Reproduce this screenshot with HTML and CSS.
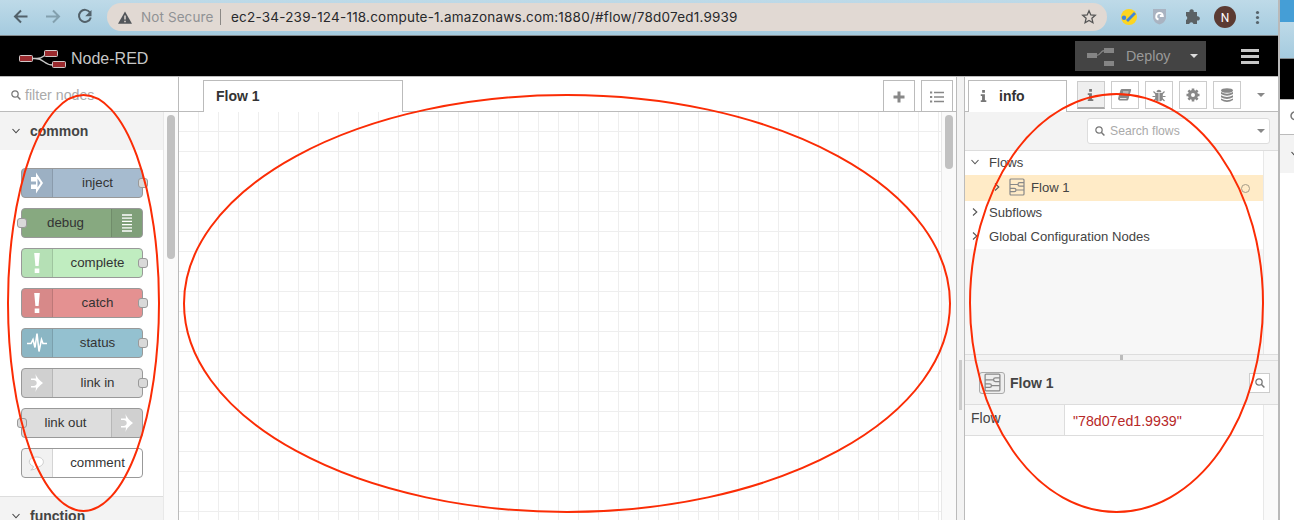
FILE: index.html
```html
<!DOCTYPE html>
<html lang="en">
<head>
<meta charset="utf-8">
<title>Node-RED</title>
<link rel="stylesheet" href="styles.css">
</head>
<body>
<svg width="0" height="0" class="defs">
  <defs>
    <symbol id="search" viewBox="0 0 12 12"><circle cx="4.8" cy="4.8" r="3.800" fill="none" stroke="currentColor" stroke-width="1.500"/><path d="M7.5 7.5L11.300 11.300" stroke="currentColor" stroke-width="1.8"/></symbol>
    <symbol id="down" viewBox="0 0 10 10"><path d="M1.500 3L5 6.800L8.500 3" fill="none" stroke="currentColor" stroke-width="1.100"/></symbol>
    <symbol id="right" viewBox="0 0 10 10"><path d="M3 1.500L6.800 5L3 8.500" fill="none" stroke="currentColor" stroke-width="1.100"/></symbol>
    <symbol id="info" viewBox="0 0 8 13"><path d="M2 0h3v3H2zM0.5 4.500h4.500v6.500h1.500v2H.5v-2h1.400V6.500H.5z" fill="currentColor"/></symbol>
    <symbol id="flow" viewBox="0 0 16 18"><g fill="none" stroke="currentColor" stroke-width="1.200"><rect x="1" y="1" width="14" height="16" rx="1"/><path d="M1 6.500h8M15 4.700H10.700q-1.700 0-1.700 1.700t1.700 1.700H15M1 10.300h4.300q1.700 0 1.700 1.700t-1.700 1.700H1M7 12h8"/></g></symbol>
    <symbol id="link" viewBox="0 0 14 20"><path d="M5.500 1Q7 5.500 13 10Q7 14.500 5.500 19L6 14.500H1V5.500H6z" fill="currentColor"/><path d="M0 7h3.500q3.200.3 3.200 3t-3.200 3H0z" fill="#d1d1d1"/></symbol>
    <symbol id="bang" viewBox="0 0 8 20"><path d="M1.200 0h5.600L5.600 13H2.400zM1.700 15.500h4.600V20H1.700z" fill="currentColor"/></symbol>
  </defs>
</svg>
<div class="screen">
  <div class="window">
    <div class="chrome">
      <svg class="nav" width="100" height="35" fill="none" stroke-width="2">
        <path d="M27.500 16.500H15M21 10.500l-6 6l6 6" stroke="#52616a"/>
        <path d="M46 16.500h12.500M53 10.500l6 6l-6 6" stroke="#83a0ae"/>
        <path d="M90 12.500a6 6 0 1 0 .8 5" stroke="#52616a"/><path d="M91.500 10v6.300h-6.300z" fill="#52616a"/>
      </svg>
      <div class="address">
        <svg class="warn" width="14" height="13"><path d="M7 .5L14 12.700H0z" fill="#52565a"/><path d="M7 4.500v4M7 9.800v1.500" stroke="#e1d9d3" stroke-width="1.500"/></svg>
        <span class="insecure">Not Secure</span><i class="bar"></i><span class="url">ec2-34-239-124-118.compute-1.amazonaws.com:1880/#flow/78d07ed1.9939</span>
        <svg class="star" width="16" height="16" viewBox="0 0 16 16"><path d="M8 1.800l1.800 4.100 4.500.4-3.400 3 1 4.400L8 11.400l-3.900 2.300 1-4.400-3.400-3 4.500-.4z" fill="none" stroke="#555" stroke-width="1.300"/></svg>
      </div>
      <svg class="ext" width="171" height="35">
        <circle cx="22" cy="17" r="8" fill="#fdd520"/><circle cx="17" cy="17.800" r="2.200" fill="#4285d8"/><path d="M20 21L28 13" stroke="#4285d8" stroke-width="2.800"/>
        <path d="M46 9h13v9q-1 5-6.500 6.500Q47 23 46 18z" fill="#a9b3c1"/><path d="M51.500 19.500a3.300 3.300 0 1 1 4.300-3.500h-3" fill="none" stroke="#fff" stroke-width="1.900"/>
        <path d="M79 12h3.500a2.200 2.200 0 1 1 4.200 0H90v4.300a2.200 2.200 0 1 1 0 4.200V24h-3.500a2.200 2.200 0 0 0-4.300 0H79v-4a2.200 2.200 0 0 0 0-4z" fill="#5b6164"/>
        <circle cx="118" cy="17" r="11" fill="#5b3a32"/><text x="118" y="21.500" text-anchor="middle" font-family="Roboto,sans-serif" font-size="12" fill="#fff">N</text>
        <g fill="#56636b"><circle cx="150.500" cy="12.500" r="1.600"/><circle cx="150.500" cy="17.500" r="1.600"/><circle cx="150.500" cy="22.500" r="1.600"/></g>
      </svg>
    </div>
    <header class="header">
      <svg class="logo" width="48" height="20"><path d="M14 8.500H18C26 8.500 23 4 31 4M16 8.500C26 8.500 24 15 34 15" fill="none" stroke="#c8c8c8" stroke-width="1.300"/><g fill="#9b2b2f" stroke="#d0c8c8"><rect x=".5" y="5.500" width="13" height="6" rx="1"/><rect x="25.500" y=".5" width="13" height="6" rx="1"/><rect x="33.500" y="11.500" width="13" height="6" rx="1"/></g></svg>
      <span class="brand">Node-RED</span>
      <div class="deploy"><svg width="28" height="20"><path d="M0 7h10v5H0zM17 2h10v5H17zM17 15h10v5H17z" fill="#858585"/><path d="M9 9.500C15 9.500 12 4.500 18 4.500" fill="none" stroke="#858585" stroke-width="1.300"/></svg><span>Deploy</span><i class="caret light"></i></div>
      <div class="burger"><i></i><i></i><i></i></div>
    </header>
    <div class="main">
      <aside class="palette">
        <div class="filter"><svg width="10" height="10"><use href="#search"/></svg><span>filter nodes</span></div>
        <div class="pbody">
          <div class="plist">
            <div class="cat"><svg width="10" height="10"><use href="#down"/></svg>common</div>
            <div class="nodes">
              <div class="node inject"><b><svg width="14" height="22"><path d="M1 5h5V0.500L13 11L6 21.500V17H1V12.500H6V9.500H1z" fill="#fff"/><path d="M7.500 6.500L10.500 11L7.500 15.500z" fill="#98abc0"/></svg></b><span>inject</span><i class="port"></i></div>
              <div class="node debug rev"><b><svg width="10" height="18"><path d="M0 1h10M0 4.200h10M0 7.400h10M0 10.600h10M0 13.800h10M0 17h10" stroke="#fff" stroke-width="1.300"/></svg></b><span>debug</span><i class="port"></i></div>
              <div class="node complete"><b><svg width="8" height="20"><use href="#bang"/></svg></b><span>complete</span><i class="port"></i></div>
              <div class="node catch"><b><svg width="8" height="20"><use href="#bang"/></svg></b><span>catch</span><i class="port"></i></div>
              <div class="node status"><b><svg width="20" height="22"><path d="M0 11.500h4l2-4 2 8 2-14 2 18 2.500-12 1.500 4h4" fill="none" stroke="#fff" stroke-width="1.600"/></svg></b><span>status</span><i class="port"></i></div>
              <div class="node grey"><b><svg width="14" height="20"><use href="#link"/></svg></b><span>link in</span><i class="port"></i></div>
              <div class="node grey rev"><b><svg width="14" height="20"><use href="#link"/></svg></b><span>link out</span><i class="port"></i></div>
              <div class="node comment"><b><svg width="18" height="15"><path d="M5.500 10.500C-1 8 0 1 8.500 1S18 9.500 9.500 11.200Q7 14 2.800 14Q5.300 12.500 5.500 10.500z" fill="#fff" stroke="#ccc"/></svg></b><span>comment</span></div>
            </div>
            <div class="cat fn"><svg width="10" height="10"><use href="#down"/></svg>function</div>
          </div>
          <div class="track"><i class="t1"></i></div>
        </div>
      </aside>
      <section class="workspace">
        <div class="tabs"><div class="tab">Flow 1</div><div class="tbtn"><svg width="12" height="12"><path d="M6 .5v11M.5 6h11" stroke="#888" stroke-width="3"/></svg></div><div class="tbtn last"><svg width="14" height="12"><path d="M4 1.500h10M4 6h10M4 10.500h10" stroke="#888" stroke-width="1.400"/><path d="M0 1.500h2.200M0 6h2.200M0 10.500h2.200" stroke="#888" stroke-width="2"/></svg></div></div>
        <div class="wbody"><div class="grid"></div><div class="track wtrack"><i class="t2"></i></div></div>
      </section>
      <div class="splitter"><i></i></div>
      <aside class="sidebar">
        <div class="stabs">
          <div class="stab"><svg width="8" height="12"><use href="#info"/></svg>info</div>
          <div class="sbtns">
            <div class="sbtn on"><svg width="8" height="12"><use href="#info"/></svg></div>
            <div class="sbtn"><svg width="14" height="12"><path d="M3.500 0H12.500q1 .3.500 1.500L10.500 10q-.5 1.500-1.500 1.500H1.500Q-.5 11 .3 8.500L2.500 1z" fill="#888"/><path d="M5 3h5.500M4.500 5h5.500M2 9.500h6.500" stroke="#fff" stroke-width=".8"/></svg></div>
            <div class="sbtn"><svg width="14" height="13"><path d="M4.500 3.200a2.500 2.500 0 0 1 5 0zM3.200 4h3.400v8.500Q3.200 12 3.200 9zM7.400 4h3.400v5q0 3-3.400 3.500z" fill="#888"/><path d="M1.500 2.500L4 5M12.500 2.500L10 5M.5 7.500h3M10.500 7.500h3M1.500 12L4 9.500M12.500 12L10 9.500" stroke="#888" stroke-width="1.200"/></svg></div>
            <div class="sbtn"><svg width="14" height="14"><circle cx="7" cy="7" r="3.500" fill="none" stroke="#888" stroke-width="3"/><path d="M7 .5v2.500M7 11V13.500M.5 7h2.500M11 7h2.500M2.400 2.400l1.500 1.500M10.100 10.100l1.500 1.500M11.600 2.400L10.100 3.900M3.900 10.100l-1.500 1.500" stroke="#888" stroke-width="2.600"/></svg></div>
            <div class="sbtn"><svg width="12" height="14" fill="#888"><ellipse cx="6" cy="2.500" rx="6" ry="2.300"/><path d="M0 4q6 3.500 12 0v2q-6 3.500-12 0zM0 7.200q6 3.500 12 0v2q-6 3.500-12 0zM0 10.400q6 3.500 12 0v1.500q-6 4-12 0z"/></svg></div>
          </div>
          <i class="caret"></i>
        </div>
        <div class="stool"><div class="search"><svg width="10" height="10"><use href="#search"/></svg><span>Search flows</span><i class="caret"></i></div></div>
        <div class="outline">
          <div class="tree">
            <div class="row"><svg width="10" height="10"><use href="#down"/></svg>Flows</div>
            <div class="row sel"><svg width="10" height="10"><use href="#right"/></svg><svg class="ficon" width="16" height="18"><use href="#flow"/></svg>Flow 1<i class="ring"></i></div>
            <div class="row"><svg width="10" height="10"><use href="#right"/></svg>Subflows</div>
            <div class="row"><svg width="10" height="10"><use href="#right"/></svg>Global Configuration Nodes</div>
          </div>
          <div class="track strack"></div>
        </div>
        <div class="hsplit"><i></i></div>
        <div class="ihead"><div class="ibox"><svg width="17" height="19"><use href="#flow"/></svg></div><span>Flow 1</span><div class="find"><svg width="10" height="10"><use href="#search"/></svg></div></div>
        <div class="ibody"><div class="props"><div class="prop"><div class="key">Flow</div><div class="val">"78d07ed1.9939"</div></div></div><div class="track strack"></div></div>
      </aside>
    </div>
  </div>
  <div class="behind">
    <div class="b1"></div><div class="b2"></div><div class="b3"></div>
    <div class="b4"><svg width="12" height="12"><use href="#search"/></svg></div>
    <div class="b5"><svg width="10" height="10"><use href="#down"/></svg></div>
  </div>
  <svg class="marks" width="1294" height="520" fill="none" stroke="#fb2c05" stroke-width="2"><ellipse cx="83.500" cy="303" rx="75.500" ry="208"/><ellipse cx="567" cy="303.500" rx="383" ry="208.500"/><ellipse cx="1116.500" cy="303" rx="146.500" ry="209"/></svg>
</div>
</body>
</html>
```
FILE: styles.css
```css
* { box-sizing: border-box; }
body { margin: 0; font-family: "Liberation Sans", Arial, sans-serif; font-size: 13px; color: #444; overflow: hidden; }
svg { flex: none; display: block; }
.defs { position: absolute; }
.screen { position: relative; display: flex; width: 1294px; height: 520px; overflow: hidden; background: #fff; }
.window { width: 1280px; border-right: 2px solid #b9b9b9; display: flex; flex-direction: column; }
.chrome { height: 36px; display: flex; background: linear-gradient(#bedae8, #a5cbdf); border-bottom: 1px solid #83898c; }
.nav { margin-right: 7px; }
.address { width: 1000px; height: 28px; margin-top: 3px; border-radius: 14px; background: #e1d9d3; display: flex; align-items: center; padding: 0 10px 0 11px; font-family: Inter, sans-serif; font-size: 13.5px; white-space: nowrap; }
.insecure { color: #909295; margin-left: 9px; width: 72px; letter-spacing: 0.1px; }
.bar { width: 1px; height: 16px; background: #8c8986; margin: 0 10px 0 7px; }
.url { color: #28292c; letter-spacing: 0.21px; }
.star { margin-left: auto; }
.header { height: 40px; background: #000; display: flex; align-items: center; padding-left: 19px; flex: none; }
.logo { margin-top: 7px; }
.brand { color: #c7c7c7; font-size: 16px; margin: 6px 0 0 4px; }
.deploy { margin-left: auto; width: 131px; height: 30px; background: #444; display: flex; align-items: center; padding-left: 12px; color: #999; font-size: 14.3px; }
.deploy span { margin: 0 19px 0 11px; width: 45px; }
.deploy svg { margin-top: -1px; }
.caret { border: 4px solid transparent; border-top-color: #888; border-bottom: 0; width: 8px; height: 4px; flex: none; }
.caret.light { border-top-color: #ddd; }
.burger { width: 18px; margin: 0 19px 0 35px; display: grid; gap: 3px; }
.burger i { height: 3px; background: #c7c7c7; }
.main { flex: 1; display: flex; border-top: 1px solid #bbb; min-height: 0; }
.palette { width: 179px; border-right: 1px solid #bbb; display: flex; flex-direction: column; }
.filter { height: 35px; border-bottom: 1px solid #bbb; display: flex; align-items: center; gap: 4px; padding: 2px 0 0 11px; font-size: 14.2px; color: #aaa; }
.filter svg { color: #777; }
.pbody { flex: 1; display: flex; overflow: hidden; }
.plist { width: 163px; }
.track { width: 15px; border-left: 1px solid #e8e8e8; background: #fafafa; padding: 3px 0 0 3px; }
.track i { display: block; width: 8px; border-radius: 4px; background: #c1c1c1; }
.t1 { height: 144px; }
.t2 { height: 54px; }
.cat { height: 38px; background: #f3f3f3; display: flex; align-items: center; gap: 9px; padding-left: 11px; font-weight: bold; font-size: 14px; color: #444; }
.fn { border-top: 1px solid #ddd; height: 39px; }
.nodes { padding: 18px 20px 18px 21px; display: grid; gap: 10px; height: 346px; align-content: start; }
.node { position: relative; height: 30px; width: 122px; border: 1px solid #999; border-radius: 4px; display: flex; align-items: center; color: #333; font-size: 13.3px; }
.node b { width: 31px; height: 28px; background: rgba(0,0,0,.055); border-right: 1px solid rgba(0,0,0,.12); display: flex; align-items: center; justify-content: center; color: #fff; border-radius: 3px 0 0 3px; }
.node span { flex: 1; text-align: center; padding-bottom: 2px; }
.rev { flex-direction: row-reverse; }
.rev b { border-right: 0; border-left: 1px solid rgba(0,0,0,.12); border-radius: 0 3px 3px 0; }
.rev span { padding-right: 2px; }
.port { position: absolute; right: -6px; top: 9px; width: 10px; height: 10px; background: #d9d9d9; border: 1px solid #999; border-radius: 3px; }
.rev .port { right: auto; left: -5px; }
.inject { background: #a6bbcf; }
.debug { background: #87a980; }
.complete { background: #c0edc0; }
.catch { background: #e49191; }
.status { background: #94c1d0; }
.grey { background: #ddd; }
.comment { background: #fff; }
.workspace { width: 778px; border-right: 1px solid #bbb; display: flex; flex-direction: column; }
.tabs { height: 35px; border-bottom: 1px solid #bbb; display: flex; padding: 3px 3px 0 24px; flex: none; }
.tab { width: 200px; height: 32px; border: 1px solid #bbb; border-bottom: 0; background: #fff; font-weight: bold; font-size: 14px; padding: 7px 12px; color: #333; }
.tbtn { width: 32px; height: 32px; border: 1px solid #bbb; border-bottom: 0; margin-left: auto; display: flex; justify-content: center; align-items: center; padding-top: 1px; }
.last { margin-left: 6px; }
.wbody { flex: 1; display: flex; }
.grid { width: 762px; background-image: linear-gradient(90deg, #eee 1px, transparent 1px), linear-gradient(#eee 1px, transparent 1px); background-size: 20px 20px; background-position: 19px 19px; }
.splitter { width: 7px; background: #f3f3f3; display: flex; align-items: flex-start; padding: 283px 0 0 2px; }
.splitter i { width: 3px; height: 50px; background: #ccc; }
.sidebar { flex: 1; border-left: 1px solid #bbb; display: flex; flex-direction: column; min-width: 0; }
.stabs { height: 35px; border-bottom: 1px solid #bbb; display: flex; padding: 3px 0 0 3px; flex: none; }
.stab { width: 99px; height: 32px; border: 1px solid #bbb; border-bottom: 0; background: #fff; display: flex; align-items: center; gap: 11px; padding: 0 0 2px 11px; font-weight: bold; font-size: 14px; color: #333; }
.stab svg, .sbtn.on svg { color: #777; }
.sbtns { display: flex; gap: 6px; margin: 1px 16px 0 10px; }
.sbtn { width: 28px; height: 28px; border: 1px solid #ccc; display: flex; align-items: center; justify-content: center; }
.sbtn.on { background: #efefef; border-bottom: 2px solid #aaa; }
.stabs > .caret { margin-top: 13px; }
.stool { height: 39px; background: #f3f3f3; border-bottom: 1px solid #ddd; padding: 6px 8px 0 0; display: flex; justify-content: flex-end; flex: none; }
.search { width: 183px; height: 26px; background: #fff; border: 1px solid #ddd; border-radius: 3px; display: flex; align-items: center; padding: 0 4px 0 7px; color: #777; }
.search span { margin: 0 auto 1px 5px; color: #aaa; font-size: 12.2px; }
.outline { height: 203px; display: flex; background: #f7f7f7; }
.tree { width: 298px; }
.row { height: 24px; background: #fff; display: flex; align-items: center; gap: 9px; padding: 0 0 2px 5px; color: #444; font-size: 13.1px; }
.row.sel { height: 26px; background: #ffebc7; padding-left: 27px; gap: 6px; }
.ficon { color: #888; margin-left: 1px; }
.row svg:first-child { color: #555; }
.ring { width: 9px; height: 9px; border: 1px solid #a59b88; border-radius: 50%; margin: 2px 13px 0 auto; }
.strack { flex: 1; }
.hsplit { height: 7px; border: 1px solid #ddd; border-left: 0; border-right: 0; background: #f3f3f3; display: flex; justify-content: center; }
.hsplit i { width: 3px; height: 5px; background: #bbb; }
.ihead { height: 44px; background: #f3f3f3; border-bottom: 1px solid #ddd; display: flex; align-items: center; padding: 0 8px 0 14px; font-weight: bold; font-size: 14px; color: #444; }
.ibox { width: 26px; height: 22px; border: 1px solid #aaa; border-radius: 3px; background: #eee; display: flex; align-items: center; justify-content: center; color: #888; margin-right: 5px; }
.find { width: 21px; height: 20px; border: 1px solid #ccc; background: #fff; margin-left: auto; display: flex; align-items: center; justify-content: center; color: #777; }
.ibody { flex: 1; display: flex; }
.props { width: 298px; }
.prop { height: 31px; display: flex; border-bottom: 1px solid #ddd; }
.key { width: 100px; background: #f7f7f7; border-right: 1px solid #ddd; padding: 5px 0 0 6px; font-size: 14px; }
.val { padding: 8px 0 0 8px; color: #b72828; font-size: 14.2px; }
.behind { width: 14px; overflow: hidden; }
.b1 { height: 22px; background: #459ed6; }
.b2 { height: 37px; background: linear-gradient(#bedae8, #a5cbdf); border-bottom: 1px solid #83898c; }
.b3 { height: 40px; background: #000; }
.b4 { height: 36px; border: 1px solid #bbb; border-left: 0; border-right: 0; padding: 11px 0 0 10px; color: #777; }
.b5 { height: 38px; background: #f3f3f3; padding: 14px 0 0 10px; }
.marks { position: absolute; left: 0; top: 0; pointer-events: none; }
```
